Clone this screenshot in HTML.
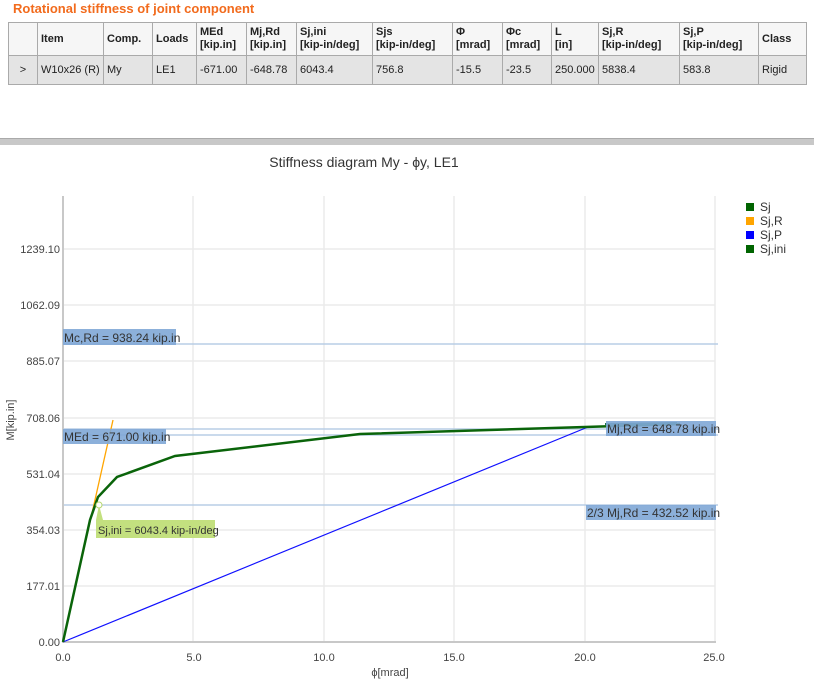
<!DOCTYPE html>
<html><head><style>
body{margin:0;width:814px;height:684px;background:#fff;font-family:"Segoe UI","Liberation Sans",sans-serif;overflow:hidden;position:relative}
.t{position:absolute;left:13px;top:1px;color:#f26b1d;font-weight:bold;font-size:13px}
table{position:absolute;left:8px;top:22px;width:798px;table-layout:fixed;border-collapse:collapse;font-size:11px;color:#222}
td{border:1px solid #aaa;padding:0 3px;line-height:13px;vertical-align:middle;white-space:nowrap;overflow:hidden}
tr.h td{height:32px;background:#f6f6f6;font-weight:bold}
tr.r td{height:28px;background:#e4e4e4}
.sep{position:absolute;left:0;top:138px;width:814px;height:6px;background:#c8c8c8;border-top:1px solid #aaa}
</style></head><body>
<div class="t">Rotational stiffness of joint component</div>
<table>
<colgroup><col style="width:29px"><col style="width:66px"><col style="width:49px"><col style="width:44px"><col style="width:50px"><col style="width:50px"><col style="width:76px"><col style="width:80px"><col style="width:50px"><col style="width:49px"><col style="width:47px"><col style="width:81px"><col style="width:79px"><col style="width:48px"></colgroup>
<tr class="h"><td></td><td>Item</td><td>Comp.</td><td>Loads</td><td>MEd<br>[kip.in]</td><td>Mj,Rd<br>[kip.in]</td><td>Sj,ini<br>[kip-in/deg]</td><td>Sjs<br>[kip-in/deg]</td><td>Φ<br>[mrad]</td><td>Φc<br>[mrad]</td><td>L<br>[in]</td><td>Sj,R<br>[kip-in/deg]</td><td>Sj,P<br>[kip-in/deg]</td><td>Class</td></tr>
<tr class="r"><td style="text-align:center">&gt;</td><td>W10x26 (R)</td><td>My</td><td>LE1</td><td>-671.00</td><td>-648.78</td><td>6043.4</td><td>756.8</td><td>-15.5</td><td>-23.5</td><td>250.000</td><td>5838.4</td><td>583.8</td><td>Rigid</td></tr>
</table>
<div class="sep"></div>
<svg style="position:absolute;left:0;top:0" width="814" height="684" font-family="Segoe UI,Liberation Sans,sans-serif">
<text x="364" y="167" font-size="14" fill="#333" text-anchor="middle" font-family="Liberation Sans Narrow,Liberation Sans,sans-serif">Stiffness diagram My - ϕy, LE1</text>
<g stroke="#ebebeb" stroke-width="1.5">
<line x1="193" y1="196" x2="193" y2="642"/><line x1="324" y1="196" x2="324" y2="642"/><line x1="454" y1="196" x2="454" y2="642"/><line x1="585" y1="196" x2="585" y2="642"/><line x1="715" y1="196" x2="715" y2="642"/>
<line x1="63" y1="249" x2="715" y2="249"/><line x1="63" y1="305" x2="715" y2="305"/><line x1="63" y1="361" x2="715" y2="361"/><line x1="63" y1="418" x2="715" y2="418"/><line x1="63" y1="474" x2="715" y2="474"/><line x1="63" y1="530" x2="715" y2="530"/><line x1="63" y1="586" x2="715" y2="586"/>
</g>
<g stroke="#b8cde6" stroke-width="1.5">
<line x1="63" y1="344" x2="718" y2="344"/><line x1="63" y1="429" x2="718" y2="429"/><line x1="63" y1="435" x2="718" y2="435"/><line x1="63" y1="505" x2="718" y2="505"/>
</g>
<g stroke="#c8c8c8" stroke-width="2"><line x1="63" y1="196" x2="63" y2="643"/><line x1="62" y1="642" x2="716" y2="642"/></g>
<g font-size="11" fill="#444" text-anchor="end">
<text x="60" y="253">1239.10</text><text x="60" y="309">1062.09</text><text x="60" y="365">885.07</text><text x="60" y="422">708.06</text><text x="60" y="478">531.04</text><text x="60" y="534">354.03</text><text x="60" y="590">177.01</text><text x="60" y="646">0.00</text>
</g>
<g font-size="11" fill="#444" text-anchor="middle">
<text x="63" y="661">0.0</text><text x="194" y="661">5.0</text><text x="324" y="661">10.0</text><text x="454" y="661">15.0</text><text x="585" y="661">20.0</text><text x="714" y="661">25.0</text>
<text x="390" y="676">ϕ[mrad]</text>
</g>
<text transform="translate(14,420) rotate(-90)" font-size="11" fill="#444" text-anchor="middle">M[kip.in]</text>
<line x1="63" y1="642" x2="588" y2="427" stroke="#1010ff" stroke-width="1.2"/>
<line x1="63" y1="642" x2="113" y2="420" stroke="#ffa500" stroke-width="1.3"/>
<polyline points="63,642 90,520 98,497 117,477 175,456 360,434 585,427 680,424" fill="none" stroke="#0a640a" stroke-width="2.5"/>
<line x1="605" y1="424" x2="677" y2="423" stroke="#1a6f4a" stroke-width="2"/>
<g font-size="12" fill="#333">
<rect x="63" y="329" width="113" height="16" fill="#7fa7d6" opacity="0.9"/><text x="64" y="342">Mc,Rd = 938.24 kip.in</text>
<rect x="63" y="429" width="103" height="15" fill="#7fa7d6" opacity="0.9"/><text x="64" y="441">MEd = 671.00 kip.in</text>
<rect x="606" y="421" width="110" height="15" fill="#7fa7d6" opacity="0.9"/><text x="607" y="433">Mj,Rd = 648.78 kip.in</text>
<rect x="586" y="505" width="130" height="15" fill="#7fa7d6" opacity="0.9"/><text x="587" y="517">2/3 Mj,Rd = 432.52 kip.in</text>
</g>
<polygon points="99,505 103,520 215,520 215,538 96,538 96,520" fill="#c3e07f"/>
<circle cx="99" cy="505" r="3" fill="#fff" stroke="#b5d76e"/>
<text x="98" y="534" font-size="11" fill="#333">Sj,ini = 6043.4 kip-in/deg</text>
<g font-size="12" fill="#333">
<rect x="746" y="203" width="8" height="8" fill="#006400"/><text x="760" y="211">Sj</text>
<rect x="746" y="217" width="8" height="8" fill="#ffa500"/><text x="760" y="225">Sj,R</text>
<rect x="746" y="231" width="8" height="8" fill="#0000ff"/><text x="760" y="239">Sj,P</text>
<rect x="746" y="245" width="8" height="8" fill="#006400"/><text x="760" y="253">Sj,ini</text>
</g>
</svg>
</body></html>
